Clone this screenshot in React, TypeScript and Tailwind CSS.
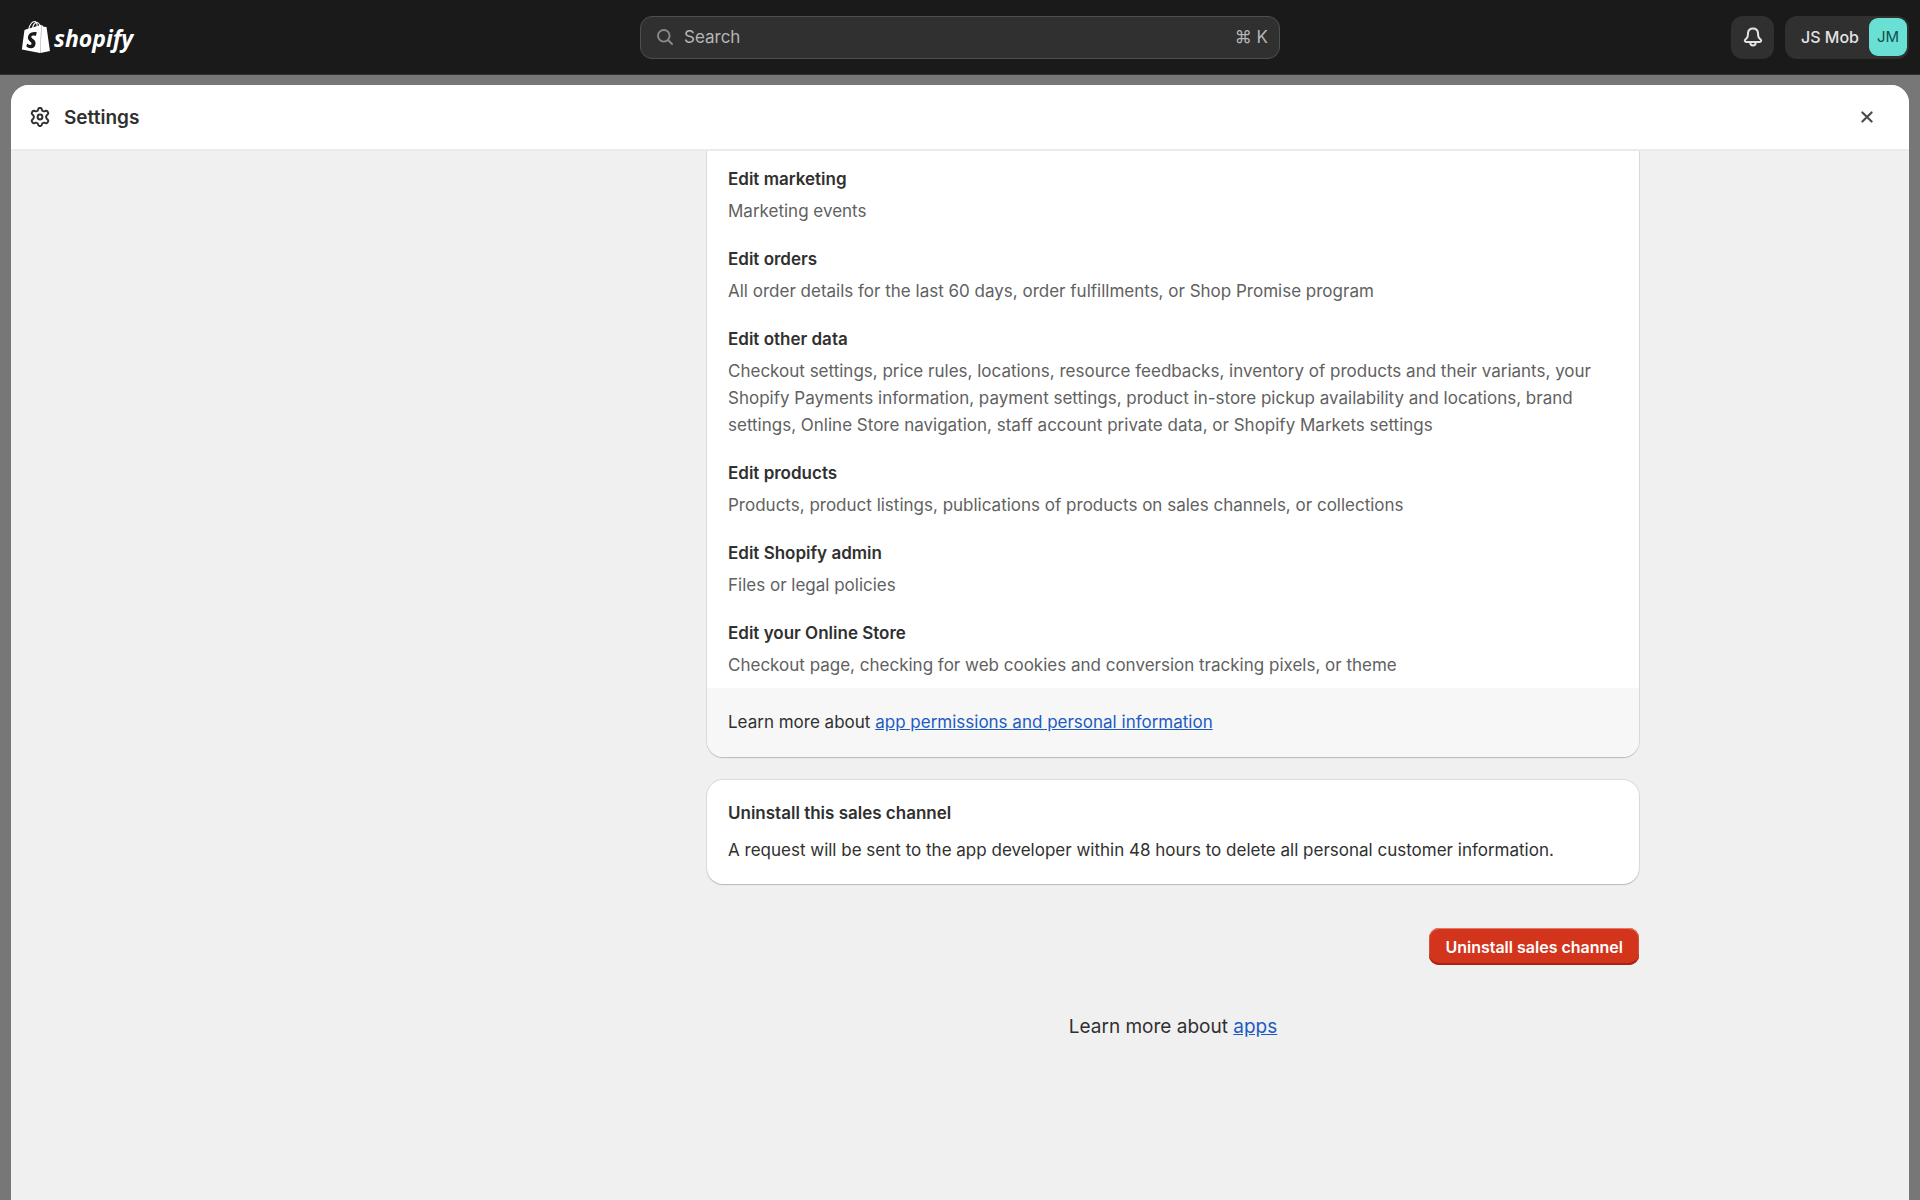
import { SiShopify } from "react-icons/si";

interface Permission {
  title: string;
  details: string;
}

const permissions: Permission[] = [
  { title: "Edit marketing", details: "Marketing events" },
  {
    title: "Edit orders",
    details: "All order details for the last 60 days, order fulfillments, or Shop Promise program",
  },
  {
    title: "Edit other data",
    details:
      "Checkout settings, price rules, locations, resource feedbacks, inventory of products and their variants, your Shopify Payments information, payment settings, product in-store pickup availability and locations, brand settings, Online Store navigation, staff account private data, or Shopify Markets settings",
  },
  {
    title: "Edit products",
    details: "Products, product listings, publications of products on sales channels, or collections",
  },
  { title: "Edit Shopify admin", details: "Files or legal policies" },
  {
    title: "Edit your Online Store",
    details: "Checkout page, checking for web cookies and conversion tracking pixels, or theme",
  },
];

function BagLogo() {
  return (
    <svg viewBox="0 0 24 24" className="size-8 shrink-0">
      {/* fold between the front and the side of the bag */}
      <path d="M15 23.8L16 3.4" stroke="#8a8a8a" strokeWidth="1.2" />
      <SiShopify width="24" height="24" size={24} />
    </svg>
  );
}

function SearchIcon() {
  return (
    <svg viewBox="0 0 16 16" className="size-4 shrink-0" fill="none" stroke="currentColor" strokeWidth="1.9" strokeLinecap="round">
      <circle cx="6.8" cy="6.8" r="5.8" />
      <path d="M11 11l4 4" />
    </svg>
  );
}

function BellIcon() {
  return (
    <svg viewBox="0 0 20 20" className="size-5" fill="none" stroke="currentColor" strokeWidth="2" strokeLinejoin="round">
      <path d="M10 1.5C7.2 1.5 5.2 3.4 5 6.1L4.8 8.6C4.7 9.9 4.3 10.7 3.4 11.5L2.4 12.4C1.3 13.4 1.8 14.9 3.3 14.9H16.7C18.2 14.9 18.7 13.4 17.6 12.4L16.6 11.5C15.7 10.7 15.3 9.9 15.2 8.6L15 6.1C14.8 3.4 12.8 1.5 10 1.5Z" />
      <path d="M7.3 15V15.8A2.7 2.7 0 0 0 12.7 15.8V15" />
    </svg>
  );
}

function GearIcon() {
  return (
    <svg viewBox="0 0 20 20" className="size-5" fill="none" stroke="currentColor" strokeWidth="2" strokeLinejoin="round">
      <path d="M8.2 2.3Q8.4 1 9.4 1H10.6Q11.6 1 11.8 2.3Q12 3.7 13.1 4.1Q13.9 4.5 15.1 4.1L15.8 3.8Q16.8 3.5 17.4 4.4L18.1 5.6Q18.6 6.6 17.8 7.3L17.2 7.8Q16.1 8.8 16.1 10Q16.1 11.2 17.2 12.2L17.8 12.7Q18.6 13.4 18.1 14.4L17.4 15.6Q16.8 16.5 15.8 16.2L15.1 15.9Q13.9 15.5 13.1 15.9Q12 16.3 11.8 17.7Q11.6 19 10.6 19H9.4Q8.4 19 8.2 17.7Q8 16.3 6.9 15.9Q6.1 15.5 4.9 15.9L4.2 16.2Q3.2 16.5 2.6 15.6L1.9 14.4Q1.4 13.4 2.2 12.7L2.8 12.2Q3.9 11.2 3.9 10Q3.9 8.8 2.8 7.8L2.2 7.3Q1.4 6.6 1.9 5.6L2.6 4.4Q3.2 3.5 4.2 3.8L4.9 4.1Q6.1 4.5 6.9 4.1Q8 3.7 8.2 2.3Z" />
      <circle cx="10" cy="10" r="2.4" />
    </svg>
  );
}

function CloseIcon() {
  return (
    <svg viewBox="0 0 12 12" className="size-3" fill="none" stroke="currentColor" strokeWidth="2.1" strokeLinecap="round">
      <path d="M1.4 1.4l9.2 9.2M10.6 1.4l-9.2 9.2" />
    </svg>
  );
}

function TopBar() {
  return (
    <header className="grid h-[75px] shrink-0 grid-cols-3 items-center border-b border-[#303030] bg-[#1a1a1a]">
      <a href="#" className="flex items-center gap-[2px] pl-5 text-white">
        <BagLogo />
        <span className="pt-[2px] font-['Open_Sans',sans-serif] text-[23px] leading-8 font-bold italic">shopify</span>
      </a>
      <label className="flex h-[43px] items-center gap-[11px] rounded-xl border border-[#4f4f4f] bg-[#303030] pr-[11px] pl-4 text-[#8a8a8a]">
        <SearchIcon />
        <input
          type="text"
          placeholder="Search"
          className="min-w-0 flex-1 bg-transparent text-[17px] text-[#b5b5b5] outline-none placeholder:text-[#b5b5b5]"
        />
        <kbd className="font-[Inter,sans-serif] text-[17px] text-[#b5b5b5]">⌘ K</kbd>
      </label>
      <div className="flex justify-end gap-[11px] pr-[11px]">
        <button aria-label="Notifications" className="flex size-[43px] items-center justify-center rounded-xl bg-[#303030] text-[#e3e3e3]">
          <BellIcon />
        </button>
        <button className="flex h-[43px] items-center gap-[10px] rounded-xl bg-[#303030] pr-[2px] pl-4 text-base font-medium text-[#e3e3e3]">
          JS Mob
          <span className="flex size-[38px] items-center justify-center rounded-[9px] bg-[#6adfd3] text-[15px] font-normal text-[#0d4f49]">
            JM
          </span>
        </button>
      </div>
    </header>
  );
}

export default function App() {
  return (
    <div className="flex h-screen flex-col overflow-hidden bg-[#777] font-[Inter,sans-serif] text-[17px] leading-[27px] text-[#303030] [font-optical-sizing:none]">
      <TopBar />
      <div className="mx-[11px] mt-[10px] flex min-h-0 flex-1 flex-col overflow-hidden rounded-t-[18px] bg-[#f0f0f0]">
        <div className="flex h-[66px] shrink-0 items-center justify-between border-b-2 border-[#ebebeb] bg-white pr-8 pl-[19px]">
          <div className="flex items-center gap-[14px]">
            <GearIcon />
            <h1 className="text-[19px] font-semibold">Settings</h1>
          </div>
          <button aria-label="Close" className="flex size-5 items-center justify-center text-[#4a4a4a]">
            <CloseIcon />
          </button>
        </div>
        <main className="min-h-0 flex-1 overflow-hidden">
          <div className="mx-auto grid w-full max-w-[1358px] grid-cols-[1fr_932px]">
            <div className="col-start-2 flex flex-col">
              <section className="overflow-hidden rounded-b-2xl bg-white shadow-[0_1px_1px_#bbb,0_0_0_1px_#ddd]">
                <div className="flex flex-col gap-[21px] px-[21px] pt-[15px] pb-[9px]">
                  {permissions.map((p) => (
                    <div key={p.title} className="flex flex-col gap-[5px]">
                      <h3 className="font-semibold">{p.title}</h3>
                      <p className="text-[#616161]">{p.details}</p>
                    </div>
                  ))}
                </div>
                <p className="bg-[#f7f7f7] px-[21px] py-[21px]">
                  Learn more about{" "}
                  <a href="#" className="text-[#1d5bc4] underline">
                    app permissions and personal information
                  </a>
                </p>
              </section>
              <section className="mt-[23px] flex flex-col gap-[10px] rounded-2xl bg-white px-[21px] py-5 shadow-[0_1px_1px_#bbb,0_0_0_1px_#ddd]">
                <h2 className="font-semibold">Uninstall this sales channel</h2>
                <p>A request will be sent to the app developer within 48 hours to delete all personal customer information.</p>
              </section>
              <button className="mt-11 h-[37px] self-end rounded-[10px] bg-[#d3341c] px-4 text-base font-semibold text-white shadow-[inset_0_-2px_0_#a82317,inset_0_1px_0_#e8796b,inset_0_0_0_1px_#d9503e]">
                Uninstall sales channel
              </button>
              <p className="mt-12 text-center text-[19px]">
                Learn more about{" "}
                <a href="#" className="text-[#1d5bc4] underline">
                  apps
                </a>
              </p>
            </div>
          </div>
        </main>
      </div>
    </div>
  );
}
